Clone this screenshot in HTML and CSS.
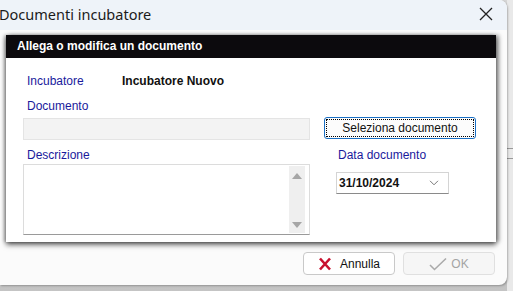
FILE: index.html
```html
<!DOCTYPE html>
<html lang="en">
<head>
    <meta charset="UTF-8">
    <meta name="viewport" content="width=device-width, initial-scale=1.0">
    <title>Documenti incubatore</title>
    <link rel="stylesheet" href="styles.css">
</head>
<body>

    <div class="screen">
        <div class="window">
            <div class="titlebar">
                <span class="title">Documenti incubatore</span>
                <svg class="close" width="14" height="14" viewBox="0 0 14 14">
                    <path d="M1 1 L13 13 M13 1 L1 13" stroke="#222" stroke-width="1.3" fill="none"/>
                </svg>
            </div>

            <div class="dialog">
                <div class="dialog-header">Allega o modifica un documento</div>
                <div class="dialog-body">
                    <div class="info">
                        <span class="label info-label">Incubatore</span>
                        <span class="value">Incubatore Nuovo</span>
                    </div>

                    <div class="label doc-label">Documento</div>

                    <div class="row file-row">
                        <div class="field"></div>
                        <button class="btn-select"><span>Seleziona documento</span></button>
                    </div>

                    <div class="row label-row">
                        <div class="label left-label">Descrizione</div>
                        <div class="label right-label">Data documento</div>
                    </div>

                    <div class="row area-row">
                        <div class="textarea">
                            <div class="text"></div>
                            <div class="scrollbar">
                                <span class="arrow up"></span>
                                <span class="arrow down"></span>
                            </div>
                        </div>
                        <div class="date-select">
                            <span>31/10/2024</span>
                            <svg width="10" height="6" viewBox="0 0 10 6">
                                <path d="M1 0.8 L5 4.8 L9 0.8" stroke="#777" stroke-width="1" fill="none"/>
                            </svg>
                        </div>
                    </div>
                </div>
            </div>

            <div class="actions">
                <button class="btn btn-cancel">
                    <svg width="14" height="14" viewBox="0 0 14 14">
                        <path d="M2 1.5 L12 12.5 M12 1.5 L2 12.5" stroke="#c8102e" stroke-width="2.6" fill="none"/>
                    </svg>
                    Annulla
                </button>
                <button class="btn btn-ok" disabled>
                    <svg width="18" height="14" viewBox="0 0 18 14">
                        <path d="M1 8 L5.5 12.5 L17 1.5" stroke="#aaa" stroke-width="1.6" fill="none"/>
                    </svg>
                    OK
                </button>
            </div>
        </div>
        <div class="behind">
            <div class="behind-line"></div>
            <div class="behind-line"></div>
        </div>
    </div>

</body>
</html>
```

FILE: styles.css
```css
body {
    margin: 0;
    background: #cdcdcd;
    font-family: "Liberation Sans", Arial, sans-serif;
    font-size: 12px;
}
.screen {
    display: flex;
    width: 513px;
    height: 291px;
    overflow: hidden;
    background: linear-gradient(#d6d6d6, #c4c4c4);
}
.window {
    width: 507px;
    height: 285px;
    flex: none;
    background: #fbfbfb;
    border-radius: 0 8px 8px 0;
    box-shadow: 1px 1px 2px rgba(0, 0, 0, 0.25);
    position: relative;
    z-index: 1;
}
.behind {
    flex: 1;
    background: #e9e9e9;
    padding-top: 148px;
}
.behind-line {
    height: 1px;
    background: #9a9a9a;
    margin-bottom: 9px;
}
.titlebar {
    height: 30px;
    background: #eef3f9;
    border-radius: 0 8px 0 0;
    display: flex;
    align-items: center;
    justify-content: space-between;
    padding-right: 14px;
}
.title {
    font-family: "Noto Sans", sans-serif;
    font-size: 14.5px;
    color: #1b1b1b;
    margin-left: -1px;
    margin-top: -2px;
}
.close {
    margin-top: -3px;
}
.dialog {
    margin: 5px 0 0 6px;
    width: 490px;
    height: 207px;
    background: #fff;
    box-shadow: 0 3px 5px rgba(0, 0, 0, 0.55), -2px 0 3px rgba(0, 0, 0, 0.25), 3px 0 4px rgba(0, 0, 0, 0.35);
}
.dialog-header {
    height: 23px;
    line-height: 23px;
    background: #0c0a0d;
    color: #fff;
    font-weight: bold;
    padding-left: 11px;
}
.dialog-body {
    padding: 16px 0 0 17px;
}
.label {
    color: #1a1a9c;
    line-height: 14px;
}
.info {
    display: flex;
    line-height: 14px;
}
.info-label {
    width: 95px;
    padding-left: 4px;
}
.value {
    font-weight: bold;
    color: #111;
}
.doc-label {
    margin-top: 11px;
    padding-left: 4px;
}
.row {
    display: flex;
}
.file-row {
    margin-top: 5px;
    align-items: flex-start;
}
.field {
    width: 285px;
    height: 20px;
    background: #f3f3f3;
    border: 1px solid #e4e4e4;
}
.btn-select {
    margin: -1px 0 0 14px;
    width: 152px;
    height: 22px;
    padding: 1px;
    background: #fcfcfc;
    border: 1px solid #1a6fc4;
    border-radius: 3px;
    font-family: inherit;
    font-size: 12px;
    color: #111;
}
.btn-select span {
    display: block;
    height: 16px;
    line-height: 16px;
    border: 1px dotted #000;
}
.label-row {
    margin-top: 8px;
}
.left-label {
    width: 297px;
    padding-left: 4px;
}
.right-label {
    padding-left: 14px;
}
.area-row {
    margin-top: 2px;
    align-items: flex-start;
}
.textarea {
    width: 285px;
    border: 1px solid #dcdcdc;
    border-bottom-color: #9a9a9a;
    display: flex;
    padding: 1px 0;
    height: 67px;
}
.text {
    flex: 1;
}
.scrollbar {
    width: 16px;
    margin-right: 4px;
    background: #efefef;
    display: flex;
    flex-direction: column;
    justify-content: space-between;
    align-items: center;
    padding: 7px 0 5px;
}
.arrow {
    width: 0;
    height: 0;
    border-left: 5px solid transparent;
    border-right: 5px solid transparent;
}
.arrow.up {
    border-bottom: 6px solid #a6a6a6;
}
.arrow.down {
    border-top: 6px solid #a6a6a6;
}
.date-select {
    margin: 8px 0 0 26px;
    width: 113px;
    height: 22px;
    border: 1px solid #d4d4d4;
    border-bottom-color: #8a8a8a;
    background: #fff;
    display: flex;
    align-items: center;
    justify-content: space-between;
    padding: 0 9px 0 2px;
    box-sizing: border-box;
    font-weight: bold;
    color: #111;
}
.actions {
    display: flex;
    justify-content: flex-end;
    gap: 8px;
    padding: 10px 12px 0 0;
}
.btn {
    width: 92px;
    height: 23px;
    border-radius: 4px;
    font-family: inherit;
    font-size: 12px;
    display: flex;
    align-items: center;
    justify-content: center;
    gap: 8px;
}
.btn-cancel {
    background: #fff;
    border: 1px solid #c9c9c9;
    color: #111;
}
.btn-ok {
    background: #f6f6f6;
    border: 1px solid #e0e0e0;
    color: #a4a4a4;
    gap: 4px;
}
```
